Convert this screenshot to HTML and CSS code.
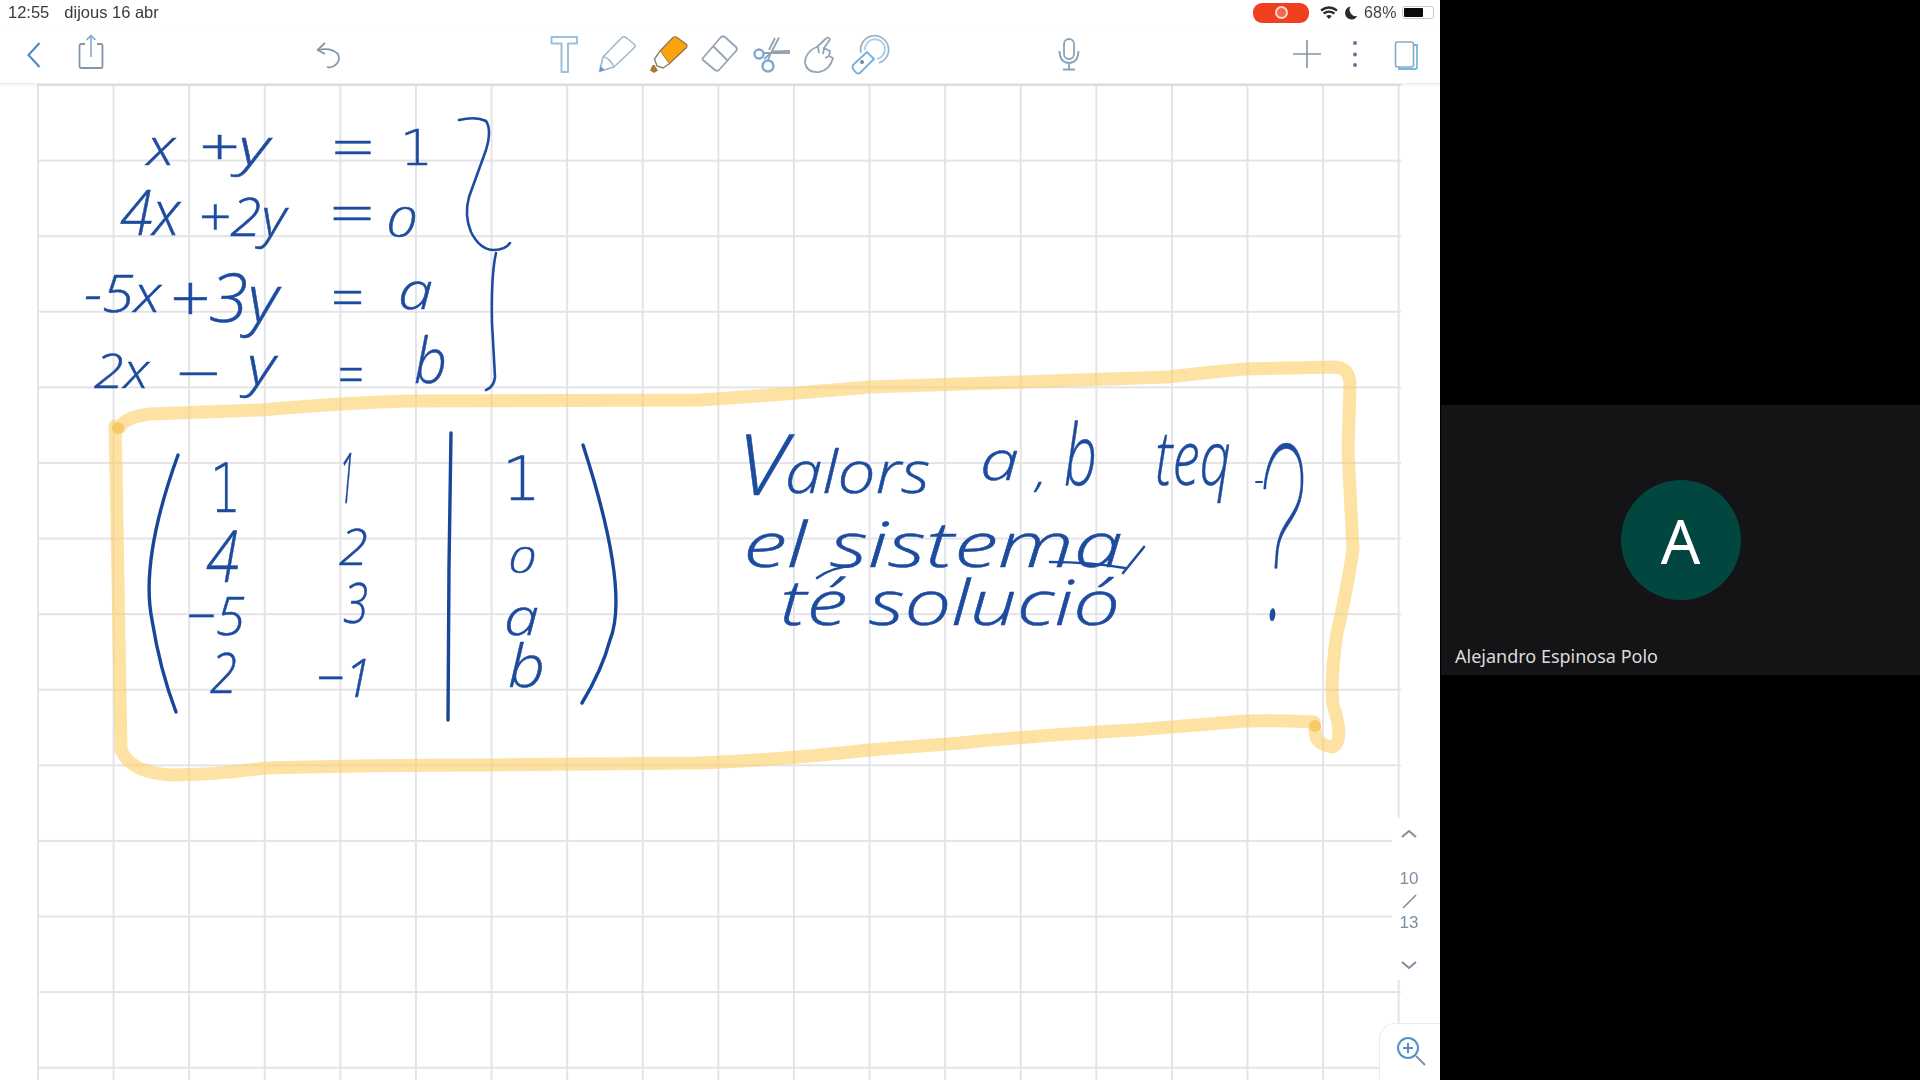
FILE: index.html
```html
<!DOCTYPE html>
<html lang="ca">
<head>
<meta charset="utf-8">
<title>Notes</title>
<link rel="stylesheet" href="styles.css">
</head>
<body>
<div class="screen">
  <main class="ipad">
    <header class="status">
      <span class="time">12:55</span>
      <span class="date">dijous 16 abr</span>
      <div class="status-right">
        <span class="rec"><span class="rec-ring"></span></span>
        <svg class="st-wifi" width="18" height="14" viewBox="1319 5 18 14"><path class="wifi-a" d="M1320 9.500Q1328 3.500 1336 9.500M1322.600 12.500Q1328 8.600 1333.400 12.500"/><path class="wifi-b" d="M1325.200 15Q1328 13.200 1330.800 15L1328 18Z"/></svg>
        <svg class="st-moon" width="13" height="14" viewBox="1344 5 13 14"><path class="moon" d="M1349.500 5.500A6.500 6.500 0 1 0 1356.300 15A6.400 6.400 0 0 1 1349.500 5.500Z"/></svg>
        <span class="pct">68%</span>
        <span class="battery"><span class="battery-fill"></span></span>
      </div>
    </header>

    <nav class="toolbar">
      <div class="group nav-group">
        <svg class="ico" viewBox="12 32 44 44"><path class="s-blue" d="M39.500 43L28.500 55L39.500 67"/></svg>
        <svg class="ico" viewBox="69 32 44 44"><path class="s-grey" d="M85 44H81Q79.500 44 79.500 46V66Q79.500 68 81 68H101Q102.500 68 102.500 66V46Q102.500 44 101 44H97"/><path class="s-blue-thin" d="M91 57V35.500M86.500 40L91 35.500L95.500 40"/></svg>
      </div>
      <div class="group far">
        <svg class="ico" viewBox="306 32 44 44"><path class="s-grey" d="M325 43L317.500 50L325 54"/><path class="s-grey" d="M318 50Q331 47 338 54Q341 62 334 66Q330 68 327 67"/></svg>
      </div>
      <div class="group tools far">
        <svg class="ico" viewBox="543 32 44 44"><path class="s-pale" d="M551.500 37H577V43.500H568V72H561.500V43.500H551.500Z"/></svg>
        <svg class="ico" viewBox="594 32 44 44"><path class="s-pen" d="M599.500 71.500L603 57L622 37.500Q624 36 626 37.500L634 44Q636 46 634 48L614 67ZM603 57Q609 57 614 67"/><path class="f-blue" d="M599.500 71.500L600.500 66L604.500 70Z"/></svg>
        <svg class="ico" viewBox="645 32 44 44"><path class="f-orange" d="M660 51L673 37.500Q675 36 677 37.500L686 44Q688 46 686 48L669 64Q664 56 660 51Z"/><path class="s-collar" d="M660 51L654.500 59L657 66L663 68L669 64"/><path class="f-nib" d="M652.500 65L650 70.500L654 73L658 70.500L654.500 65Z"/></svg>
        <svg class="ico" viewBox="696 32 44 44"><path class="s-slate" d="M703 58L721 37Q723 35.500 725 37L736 47Q738 49 736 51L719 70Q717 71.500 715 70L703 60Q702 59 703 58ZM713 46L727 60"/></svg>
        <svg class="ico" viewBox="747 32 44 44"><path class="s-slate2" d="M779 37.500L771 53L764 59M775 38L769 50M763.500 53H790M790 51L773 51.500M771 53L768 60"/><circle class="s-blue-ring" cx="759" cy="54" r="4.500"/><circle class="s-blue-ring" cx="768" cy="66" r="5.500"/></svg>
        <svg class="ico" viewBox="798 32 44 44"><path class="s-slate" d="M806 57Q810 49 817 47L826 38.500Q829 36.500 830 39.500L824 48L830 51L829 56L833 58Q830 70 819 72Q807 73 805 63Q805 60 806 57ZM818 47L819 53M824 48L823 54M829 56L825 58"/></svg>
        <svg class="ico" viewBox="849 32 44 44"><path class="s-lasso" d="M861 53A14 14 0 1 1 879 63"/><path class="s-lasso-in" d="M865 50A10 10 0 1 1 877 59"/><path class="s-cap" d="M853 65L867 52L874 59L860 73Q858 74 856.500 73L853 69Q852 67 853 65Z"/><circle class="f-slate" cx="862" cy="62" r="2"/></svg>
      </div>
      <div class="group mic">
        <svg class="ico" viewBox="1047 32 44 44"><rect class="s-mic" x="1064" y="39" width="10" height="20" rx="5"/><path class="s-mic" d="M1059.500 51Q1060 63 1069 63Q1078 63 1078.500 51M1069 63V69.500M1063 69.500H1075"/></svg>
      </div>
      <div class="group far">
        <svg class="ico" viewBox="1284 32 44 44"><path class="s-plus" d="M1293 54H1321M1307 40V68"/></svg>
      </div>
      <div class="group actions">
        <svg class="ico" viewBox="1333 32 44 44"><circle class="f-dot" cx="1355" cy="43" r="2"/><circle class="f-dot" cx="1355" cy="54.500" r="2"/><circle class="f-dot" cx="1355" cy="65" r="2"/></svg>
        <svg class="ico" viewBox="1384 32 44 44"><path class="s-back" d="M1413 45H1417V67Q1417 69 1415 69H1399V67"/><rect class="s-front" x="1395.500" y="42" width="18" height="25" rx="2"/></svg>
      </div>
    </nav>

    <section class="canvas">
      <div class="sheet"></div>
      <svg class="highlight" viewBox="0 84 1440 996">
        <path class="marker" d="M115 426Q118 432 122 424Q130 416 150 414L261 410Q340 403 408 401L700 400Q790 394 869 387L1168 377Q1210 372 1246 369L1335 367Q1350 368 1350 385L1348 450L1353 550Q1345 600 1337 633Q1330 680 1333 705Q1345 740 1333 747Q1319 745 1316 737L1314 722Q1280 720 1246 721L1134 730Q1040 735 960 743L869 750Q780 760 700 763L486 765Q370 765 265 768Q215 775 172 775Q131 773 121 750L116 467Z"/>
        <circle class="marker-dot" cx="118" cy="428" r="6"/>
        <circle class="marker-dot" cx="1315" cy="726" r="6"/>
      </svg>
      <svg class="ink" viewBox="0 84 1440 996">
        <path class="stroke" d="M459 120Q476 116 486 121Q492 130 486 150L469 197Q464 215 471 232Q480 250 494 250Q505 250 510 243"/>
        <path class="stroke" d="M496 253Q491 275 492 323L495 377Q494 387 486 390"/>
        <path class="stroke thick" d="M178 455Q140 560 152 620Q160 670 176 712"/>
        <path class="stroke thick" d="M583 445Q630 590 610 640Q602 670 582 703"/>
        <path class="stroke thick" d="M451 433L449 567L448 720"/>
        <path class="stroke" d="M817 578Q832 567 853 566"/>
        <path class="stroke" d="M1050 562Q1090 562 1125 568"/>
        <path class="stroke" d="M1144 547L1123 573"/>
        <path class="stroke thin" d="M1256 482H1262"/>

        <text class="hand" x="147" y="165" font-size="52" textLength="28" lengthAdjust="spacingAndGlyphs">x</text>
        <text class="hand" x="198" y="165" font-size="52" textLength="71" lengthAdjust="spacingAndGlyphs">+y</text>
        <text class="hand" x="330" y="166" font-size="52" textLength="43" lengthAdjust="spacingAndGlyphs">=</text>
        <text class="hand upright" x="400" y="165" font-size="49" textLength="33" lengthAdjust="spacingAndGlyphs">1</text>

        <text class="hand" x="120" y="235" font-size="62" textLength="60" lengthAdjust="spacingAndGlyphs">4x</text>
        <text class="hand" x="198" y="236" font-size="54" textLength="88" lengthAdjust="spacingAndGlyphs">+2y</text>
        <text class="hand" x="328" y="232" font-size="52" textLength="45" lengthAdjust="spacingAndGlyphs">=</text>
        <text class="hand" x="386" y="237" font-size="42" textLength="30" lengthAdjust="spacingAndGlyphs">0</text>

        <text class="hand" x="84" y="312" font-size="52" textLength="77" lengthAdjust="spacingAndGlyphs">-5x</text>
        <text class="hand" x="169" y="322" font-size="66" textLength="109" lengthAdjust="spacingAndGlyphs">+3y</text>
        <text class="hand" x="330" y="316" font-size="52" textLength="33" lengthAdjust="spacingAndGlyphs">=</text>
        <text class="hand" x="398" y="309" font-size="52" textLength="35" lengthAdjust="spacingAndGlyphs">a</text>

        <text class="hand" x="94" y="388" font-size="48" textLength="55" lengthAdjust="spacingAndGlyphs">2x</text>
        <text class="hand" x="175" y="392" font-size="52" textLength="45" lengthAdjust="spacingAndGlyphs">−</text>
        <text class="hand" x="247" y="385" font-size="56" textLength="28" lengthAdjust="spacingAndGlyphs">y</text>
        <text class="hand" x="337" y="393" font-size="52" textLength="26" lengthAdjust="spacingAndGlyphs">=</text>
        <text class="hand" x="414" y="383" font-size="62" textLength="33" lengthAdjust="spacingAndGlyphs">b</text>

        <text class="hand upright" x="210" y="512" font-size="68" textLength="31" lengthAdjust="spacingAndGlyphs">1</text>
        <text class="hand" x="206" y="582" font-size="72" textLength="33" lengthAdjust="spacingAndGlyphs">4</text>
        <text class="hand" x="186" y="635" font-size="54" textLength="59" lengthAdjust="spacingAndGlyphs">−5</text>
        <text class="hand" x="210" y="693" font-size="56" textLength="27" lengthAdjust="spacingAndGlyphs">2</text>

        <text class="hand" x="339" y="503" font-size="70" textLength="16" lengthAdjust="spacingAndGlyphs">1</text>
        <text class="hand" x="339" y="565" font-size="49" textLength="29" lengthAdjust="spacingAndGlyphs">2</text>
        <text class="hand" x="343" y="623" font-size="56" textLength="25" lengthAdjust="spacingAndGlyphs">3</text>
        <text class="hand" x="316" y="697" font-size="54" textLength="56" lengthAdjust="spacingAndGlyphs">−1</text>

        <text class="hand upright" x="502" y="500" font-size="60" textLength="39" lengthAdjust="spacingAndGlyphs">1</text>
        <text class="hand" x="508" y="573" font-size="37" textLength="27" lengthAdjust="spacingAndGlyphs">0</text>
        <text class="hand" x="504" y="635" font-size="52" textLength="35" lengthAdjust="spacingAndGlyphs">a</text>
        <text class="hand" x="508" y="687" font-size="58" textLength="37" lengthAdjust="spacingAndGlyphs">b</text>

        <text class="hand" x="737" y="495" font-size="84" textLength="50" lengthAdjust="spacingAndGlyphs">V</text>
        <text class="hand" x="785" y="493" font-size="58" textLength="145" lengthAdjust="spacingAndGlyphs">alors</text>
        <text class="hand" x="980" y="480" font-size="56" textLength="39" lengthAdjust="spacingAndGlyphs">a</text>
        <text class="hand" x="1036" y="487" font-size="40" textLength="10" lengthAdjust="spacingAndGlyphs">,</text>
        <text class="hand" x="1064" y="485" font-size="84" textLength="33" lengthAdjust="spacingAndGlyphs">b</text>
        <text class="hand" x="1155" y="485" font-size="76" textLength="76" lengthAdjust="spacingAndGlyphs">teq</text>
        <text class="hand query" x="1254" y="620" font-size="240" textLength="50" lengthAdjust="spacingAndGlyphs">?</text>
        <text class="hand" x="743" y="567" font-size="62" textLength="380" lengthAdjust="spacingAndGlyphs">el sistema</text>
        <text class="hand" x="780" y="625" font-size="62" textLength="340" lengthAdjust="spacingAndGlyphs">té solució</text>
      </svg>

      <aside class="pager">
        <svg class="chev" width="20" height="12" viewBox="0 0 20 12"><path class="s-pager" d="M3 9L10 3L17 9"/></svg>
        <div class="pages">
          <span>10</span>
          <svg class="slash" width="16" height="16" viewBox="0 0 16 16"><path class="s-pager-thin" d="M2 15L15 2"/></svg>
          <span>13</span>
        </div>
        <svg class="chev" width="20" height="12" viewBox="0 0 20 12"><path class="s-pager" d="M3 3L10 9L17 3"/></svg>
      </aside>

      <aside class="zoomer">
        <svg width="40" height="40" viewBox="0 0 40 40"><circle class="s-lens" cx="16" cy="16" r="10"/><path class="s-lens" d="M11 16H21M16 11V21"/><path class="s-pager" d="M24 24L33 33"/></svg>
      </aside>
    </section>
  </main>

  <aside class="side">
    <figure class="tile">
      <div class="avatar">A</div>
      <figcaption class="name">Alejandro Espinosa Polo</figcaption>
    </figure>
  </aside>
</div>
</body>
</html>
```

FILE: styles.css
```css
* { box-sizing: border-box; }
html, body { margin: 0; height: 100%; }
body { background: #000; overflow: hidden; font-family: "Liberation Sans", Arial, sans-serif; }

.screen { display: flex; width: 1920px; height: 1080px; }

.ipad { width: 1440px; height: 1080px; background: #fff; display: flex; flex-direction: column; }

.status { height: 28px; flex: none; display: flex; align-items: center; padding: 0 6px 3px 8px; font-size: 16.5px; color: #3a3a3c; filter: blur(.4px); }
.date { margin-left: 15px; }
.status-right { margin-left: auto; display: flex; align-items: center; }
.rec { width: 56px; height: 20px; border-radius: 9px; background: #f0401f; display: flex; align-items: center; justify-content: center; }
.rec-ring { width: 13px; height: 13px; border-radius: 50%; border: 2.5px solid #fbdcc9; background: #f4694d; }
.st-wifi { margin-left: 11px; }
.st-moon { margin-left: 7px; }
.pct { margin-left: 6px; width: 38px; font-size: 16px; letter-spacing: .2px; color: #444; }
.battery { width: 32px; height: 13px; border: 1.5px solid #c9c9c9; border-radius: 3px; padding: 1px; position: relative; }
.battery-fill { display: block; width: 19px; height: 100%; background: #0a0a0a; border-radius: 1px; }

.toolbar { height: 56px; flex: none; display: flex; align-items: flex-start; padding: 4px 0 0 12px; border-bottom: 1px solid #ececee; box-shadow: 0 1px 3px rgba(0, 0, 0, .06); position: relative; z-index: 2; background: #fff; filter: blur(.4px); }
.group { display: flex; }
.nav-group { gap: 13px; }
.far { margin-left: 193px; }
.tools { gap: 7px; }
.mic { margin-left: 154px; }
.actions { margin-left: 5px; gap: 7px; }
.ico { width: 44px; height: 44px; fill: none; }

.s-blue { fill: none; stroke: #4f86c6; stroke-width: 2; }
.s-blue-thin { fill: none; stroke: #7fa3d6; stroke-width: 1.5; }
.s-grey { fill: none; stroke: #8496a8; stroke-width: 1.8; stroke-linejoin: round; }
.s-pale { fill: #fff; stroke: #9cc0dc; stroke-width: 2; stroke-linejoin: round; }
.s-pen { fill: #fff; stroke: #9db9d2; stroke-width: 1.6; stroke-linejoin: round; }
.f-blue { fill: #5f96d0; }
.f-orange { fill: #f9a40c; stroke: #8a7355; stroke-width: 1.2; }
.s-collar { fill: #fff; stroke: #8a7f70; stroke-width: 1.4; }
.f-nib { fill: #a8793f; }
.s-slate { fill: #fff; stroke: #93a5b6; stroke-width: 1.8; stroke-linejoin: round; }
.s-slate2 { fill: none; stroke: #8fa2b3; stroke-width: 1.8; }
.s-blue-ring { fill: #fff; stroke: #7ea9d2; stroke-width: 2.4; }
.s-lasso { fill: none; stroke: #9fb4c6; stroke-width: 1.8; }
.s-lasso-in { fill: none; stroke: #a9d3ec; stroke-width: 2; }
.s-cap { fill: #fff; stroke: #6fb0dc; stroke-width: 1.8; }
.f-slate { fill: #6f879c; }
.s-mic { fill: none; stroke: #8ba3b8; stroke-width: 1.8; }
.s-plus { fill: none; stroke: #7e97a5; stroke-width: 1.6; }
.f-dot { fill: #66749f; }
.s-back { fill: none; stroke: #6fbcd8; stroke-width: 1.8; }
.s-front { fill: #fff; stroke: #8ba8c4; stroke-width: 1.6; }
.wifi-a { fill: none; stroke: #2b2b2b; stroke-width: 2.2; }
.wifi-b { fill: #2b2b2b; }
.moon { fill: #2b2b2b; }

.canvas { flex: 1; position: relative; padding-left: 37px; overflow: hidden; }
.sheet {
  width: 1364px; height: 100%;
  background-image:
    linear-gradient(to right, #e4e4e8 0, #e4e4e8 1.5px, transparent 1.5px),
    linear-gradient(to bottom, #e4e4e8 0, #e4e4e8 1.5px, transparent 1.5px);
  background-size: 75.6px 75.6px;
  background-position: 0 0;
}
.highlight, .ink { position: absolute; left: 0; top: 0; width: 1440px; height: 996px; }
.highlight { filter: blur(.7px); }
.marker { fill: none; stroke: #fbd06a; stroke-opacity: .62; stroke-width: 13; stroke-linejoin: round; stroke-linecap: round; }
.marker-dot { fill: #f7bf50; opacity: .7; }
.ink { filter: blur(.4px); }
.stroke { fill: none; stroke: #1d4c9f; stroke-width: 2.6; stroke-linecap: round; }
.thick { stroke-width: 3.4; stroke: #17469a; }
.thin { stroke-width: 2; }
.hand { font-family: "Open Sans", "Noto Sans", sans-serif; font-style: italic; font-weight: 300; fill: #1d4c9f; stroke: #1d4c9f; stroke-width: .5; }
.upright { font-family: "DejaVu Sans", sans-serif; font-style: normal; font-weight: 200; }
.query { font-family: Inter, "Open Sans", sans-serif; font-style: italic; font-weight: 100; }

.pager { position: absolute; left: 1392px; top: 734px; width: 48px; height: 162px; background: #fff; display: flex; flex-direction: column; align-items: center; padding: 10px 14px 0 0; color: #7d8ea3; font-size: 17px; filter: blur(.3px); }
.pages { display: flex; flex-direction: column; align-items: center; margin-top: 30px; line-height: 18px; gap: 5px; }
.slash { display: block; }
.pages + .chev { margin-top: 27px; }
.s-pager { fill: none; stroke: #7d8ea3; stroke-width: 2; }
.s-pager-thin { fill: none; stroke: #7d8ea3; stroke-width: 1.6; }
.zoomer { position: absolute; right: 0; bottom: 0; width: 61px; height: 57px; background: #fff; border: 1px solid #ececef; border-width: 1px 0 0 1px; border-top-left-radius: 16px; padding: 8px 0 0 12px; filter: blur(.3px); }
.s-lens { fill: none; stroke: #5790c8; stroke-width: 2; }

.side { flex: 1; display: flex; align-items: center; padding-left: 1px; }
.tile { margin: 0; width: 100%; height: 270px; background: #141416; position: relative; display: flex; align-items: center; justify-content: center; }
.avatar { width: 120px; height: 120px; border-radius: 50%; background: #02473f; color: #fff; font-family: "Noto Sans", sans-serif; font-size: 62px; line-height: 120px; text-align: center; }
.name { position: absolute; left: 14px; bottom: 6px; font-family: "Noto Sans", sans-serif; font-size: 18px; color: #dcdcdc; line-height: 25px; }
```
